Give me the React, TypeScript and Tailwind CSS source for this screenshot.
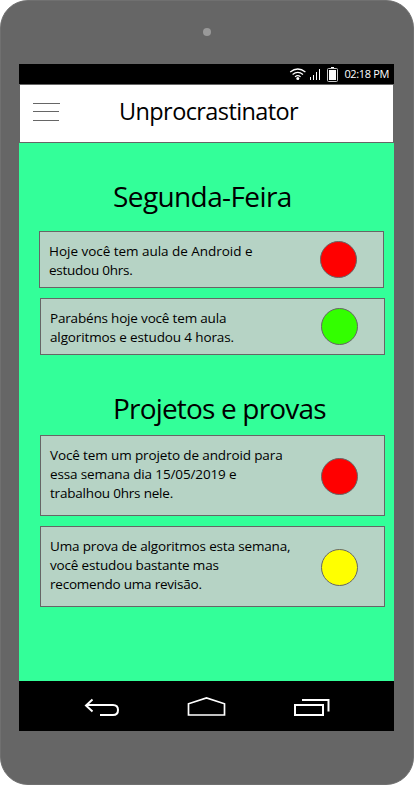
import React from "react";

type Line = { text: string; tracking: string };

function Card({ lines, color, box }: { lines: Line[]; color: string; box: string }) {
  return (
    <div className={`flex w-[345px] items-center justify-between border border-[#666] bg-[#b6d3c5] pl-[9px] pr-[26px] ${box}`}>
      <div className="self-start pt-[10px] text-[13.5px] leading-[19px]">
        {lines.map((l) => (
          <p key={l.text} className={`whitespace-nowrap ${l.tracking}`}>{l.text}</p>
        ))}
      </div>
      <div className={`size-[37px] shrink-0 rounded-full border border-[#666] ${color}`} />
    </div>
  );
}

function StatusBar() {
  return (
    <div className="flex h-5 items-center justify-end bg-black pr-[5px] text-white">
      <svg width="50" height="20" viewBox="0 0 50 20" fill="none" stroke="#fff" className="mr-[5px]">
        <path d="M1.2 8Q8.8 2 16.4 8M3.6 10.4Q8.8 6.2 14 10.4M6 12.9Q8.8 10.5 11.6 12.9" strokeWidth="1.25" />
        <circle cx="8.8" cy="14.4" r="1.5" fill="#fff" stroke="none" />
        <path d="M21.5 13v3M24.5 11v5M27.5 8v8M30.5 5v11" />
        <rect x="38.5" y="4.5" width="10" height="13" rx="1" stroke="#ccc" />
        <rect x="40" y="6" width="7" height="10" fill="#fff" stroke="none" />
        <path d="M42 3.5h3" />
      </svg>
      <span className="whitespace-nowrap text-[11px] font-medium leading-5 tracking-[-0.35px]">02:18 PM</span>
    </div>
  );
}

export default function App() {
  return (
    <div className="h-[785px] w-[414px] bg-white font-['Open_Sans','Noto_Sans',sans-serif] text-black">
      <div className="flex h-full flex-col rounded-[28px] border border-[#707070] bg-[#666] px-[18px]">
        <div className="flex h-[63px] justify-center pt-[27px]">
          <div className="size-[8px] rounded-full bg-[#999]" />
        </div>
        <div className="flex h-[667px] w-[375px] flex-col">
          <StatusBar />
          <header className="flex h-[59px] border border-[#666] bg-white pl-[13px]">
            <svg width="28" height="57" viewBox="0 0 28 57" stroke="#666">
              <path d="M0 18.5h27M0 26.5h26M0 35.5h26" />
            </svg>
            <h1 className="ml-[58px] whitespace-nowrap text-[23.5px] leading-[53px] tracking-[-0.6px]">Unprocrastinator</h1>
          </header>
          <main className="flex h-[538px] flex-col bg-[#33ff99] pl-[21px]">
            <h2 className="ml-[73px] h-[88px] whitespace-nowrap pt-[33px] text-[28px] leading-[40px] tracking-[-0.6px]">Segunda-Feira</h2>
            <Card
              box="-ml-px h-[57px]"
              color="bg-[#ff0000]"
              lines={[
                { text: "Hoje você tem aula de Android e", tracking: "tracking-[-0.03px]" },
                { text: "estudou 0hrs.", tracking: "tracking-[-0.25px]" },
              ]}
            />
            <Card
              box="mt-[10px] h-[57px]"
              color="bg-[#33ff00]"
              lines={[
                { text: "Parabéns hoje você tem aula", tracking: "tracking-[-0.18px]" },
                { text: "algoritmos e estudou 4 horas.", tracking: "tracking-[-0.13px]" },
              ]}
            />
            <h2 className="ml-[73px] h-[80px] whitespace-nowrap pt-[33px] text-[28px] leading-[40px] tracking-[-0.82px]">Projetos e provas</h2>
            <Card
              box="h-[81px]"
              color="mt-[2px] bg-[#ff0000]"
              lines={[
                { text: "Você tem um projeto de android para", tracking: "tracking-[-0.12px]" },
                { text: "essa semana dia 15/05/2019 e", tracking: "tracking-[-0.13px]" },
                { text: "trabalhou 0hrs nele.", tracking: "tracking-[-0.2px]" },
              ]}
            />
            <Card
              box="mt-[10px] h-[81px]"
              color="mt-[2px] bg-[#ffff00]"
              lines={[
                { text: "Uma prova de algoritmos esta semana,", tracking: "tracking-[-0.16px]" },
                { text: "você estudou bastante mas", tracking: "tracking-[-0.16px]" },
                { text: "recomendo uma revisão.", tracking: "tracking-[-0.22px]" },
              ]}
            />
          </main>
          <nav className="flex h-[50px] bg-black pl-[65px]">
            <svg width="246" height="50" viewBox="0 0 246 50" fill="none" stroke="#fff" strokeWidth="2">
              <path d="M8.5 18.5L2 24.5L8.5 30.5M2 24H29Q34 24 34 29T29 34H16" />
              <path d="M104.5 34V22.8L122.5 17L140.5 22.8V34Z" strokeWidth="1.7" />
              <path d="M211 24h28v10h-28ZM218 19h26.5v11.5" />
            </svg>
          </nav>
        </div>
      </div>
    </div>
  );
}
